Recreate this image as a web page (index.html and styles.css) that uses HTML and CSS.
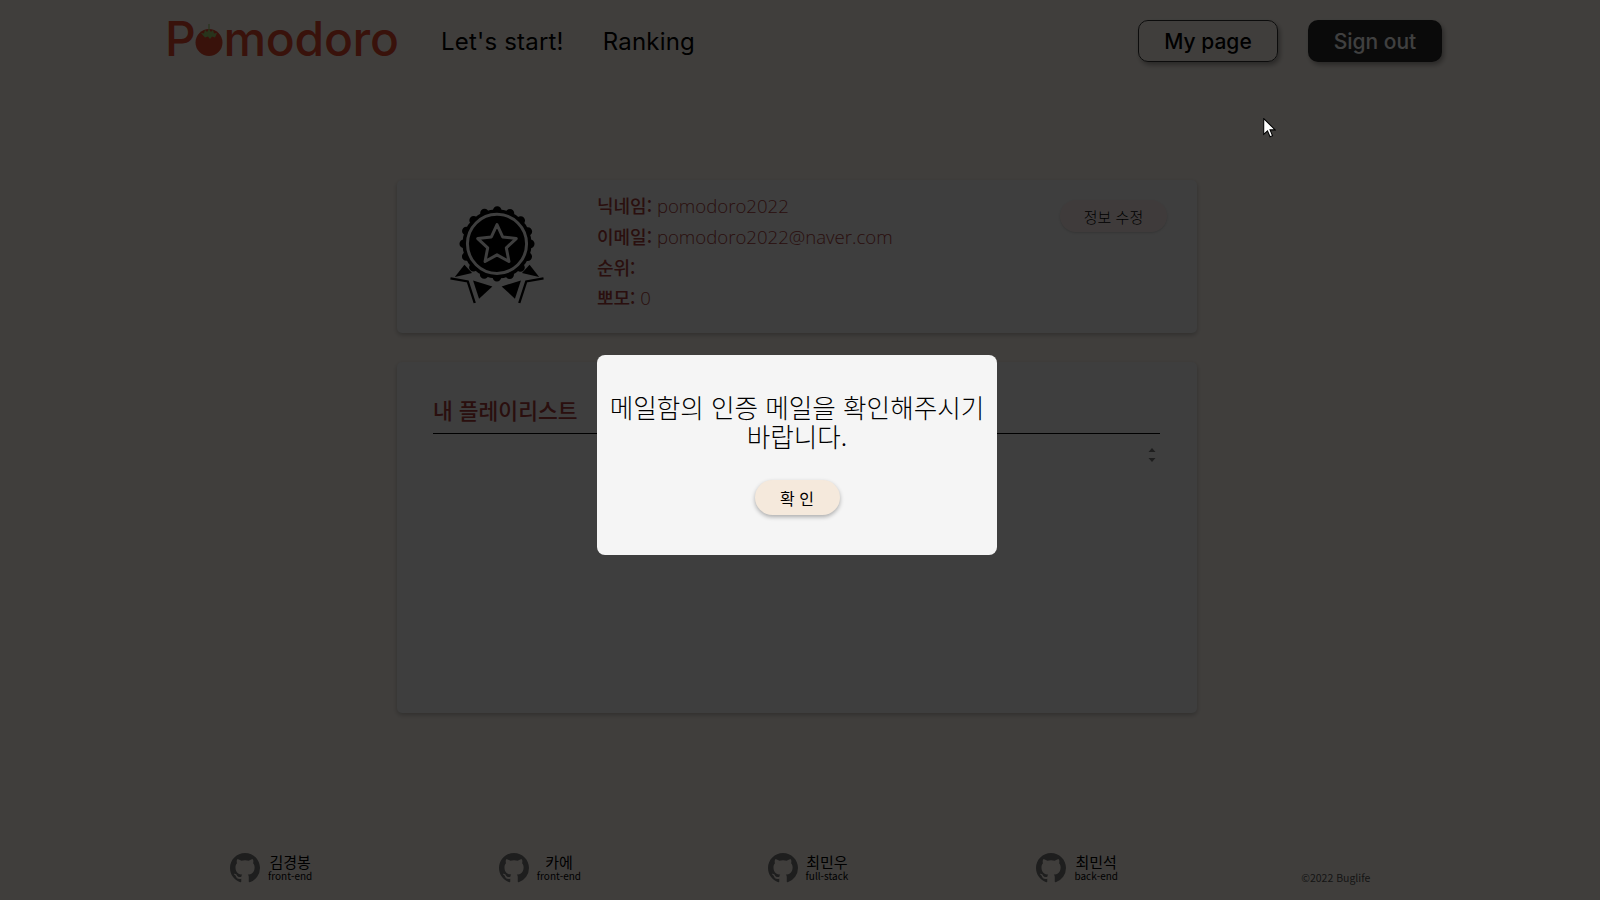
FILE: index.html
```html
<!DOCTYPE html>
<html lang="ko">
<head>
    <meta charset="UTF-8">
    <meta name="viewport" content="width=device-width, initial-scale=1.0">
    <title>Pomodoro - My page</title>
    <link rel="stylesheet" href="styles.css">
</head>
<body>
    <svg class="sprite" width="0" height="0">
        <symbol id="github" viewBox="0 0 16 16">
            <path d="M8 0C3.58 0 0 3.58 0 8c0 3.54 2.29 6.53 5.47 7.59.4.07.55-.17.55-.38 0-.19-.01-.82-.01-1.49-2.01.37-2.53-.49-2.69-.94-.09-.23-.48-.94-.82-1.13-.28-.15-.68-.52-.01-.53.63-.01 1.08.58 1.23.82.72 1.21 1.87.87 2.33.66.07-.52.28-.87.51-1.07-1.78-.2-3.64-.89-3.64-3.95 0-.87.31-1.59.82-2.15-.08-.2-.36-1.02.08-2.12 0 0 .67-.21 2.2.82.64-.18 1.32-.27 2-.27.68 0 1.36.09 2 .27 1.53-1.04 2.2-.82 2.2-.82.44 1.1.16 1.92.08 2.12.51.56.82 1.27.82 2.15 0 3.07-1.87 3.75-3.65 3.95.29.25.54.73.54 1.48 0 1.07-.01 1.93-.01 2.2 0 .21.15.46.55.38A8.013 8.013 0 0016 8c0-4.42-3.58-8-8-8z"/>
        </symbol>
    </svg>

    <!-- Header -->
    <header class="header">
        <a class="logo" href="#">
            <span>P</span>
            <svg class="logo-tomato" viewBox="0 0 28 32">
                <circle cx="14" cy="18.5" r="13.5" fill="#e2492f"/>
                <path d="M6 9l3 .5L10 6l2 2 2-2.500 2 2.500 2-2 1 3.500 3-.5-2 4.500-3-1-2 2.500-2-2.500-3 1z" fill="#9fd070"/>
                <path d="M14 8V0" stroke="#9fd070" stroke-width="1.200"/>
            </svg>
            <span>modoro</span>
        </a>
        <nav class="nav">
            <a href="#">Let's start!</a>
            <a href="#">Ranking</a>
        </nav>
        <div class="header-btns">
            <a class="btn btn-light" href="#">My page</a>
            <a class="btn btn-dark" href="#">Sign out</a>
        </div>
    </header>

    <main class="main">
        <!-- Profile card -->
        <section class="card profile">
            <svg class="medal" viewBox="170 100 300 310">
                <path d="M222 283L193 320 245 308z"/>
                <path d="M418 283L447 320 395 308z"/>
                <path d="M180 324L232 333 253 398" class="ribbon-line"/>
                <path d="M460 324L408 333 387 398" class="ribbon-line"/>
                <path d="M248 330L266 385 306 348z"/>
                <path d="M392 330L374 385 334 348z"/>
                <circle cx="320" cy="220" r="104"/>
                <circle cx="320" cy="220" r="100" class="medal-bumps"/>
                <circle cx="320" cy="220" r="89" class="medal-ring"/>
                <path d="M320 162l17 37 41 5-30 28 8 41-36-20-36 20 8-41-30-28 41-5z" class="medal-star"/>
            </svg>
            <div class="profile-info">
                <p><b>닉네임:</b> pomodoro2022</p>
                <p><b>이메일:</b> pomodoro2022@naver.com</p>
                <p><b>순위:</b></p>
                <p><b>뽀모:</b> 0</p>
            </div>
            <button class="edit-btn">정보 수정</button>
        </section>

        <!-- Playlist card -->
        <section class="card playlist">
            <h3 class="playlist-title">내 플레이리스트</h3>
            <svg class="sort-arrows" viewBox="0 0 8 14">
                <path d="M4 0l3.500 4h-7z"/>
                <path d="M4 14l3.500-4h-7z"/>
            </svg>
        </section>
    </main>

    <footer class="footer">
        <a class="member" href="#">
            <svg class="gh"><use href="#github"/></svg>
            <div><strong>김경봉</strong><small>front-end</small></div>
        </a>
        <a class="member" href="#">
            <svg class="gh"><use href="#github"/></svg>
            <div><strong>카에</strong><small>front-end</small></div>
        </a>
        <a class="member" href="#">
            <svg class="gh"><use href="#github"/></svg>
            <div><strong>최민우</strong><small>full-stack</small></div>
        </a>
        <a class="member" href="#">
            <svg class="gh"><use href="#github"/></svg>
            <div><strong>최민석</strong><small>back-end</small></div>
        </a>
        <span class="copyright">©2022 Buglife</span>
    </footer>

    <!-- Modal -->
    <div class="overlay">
        <div class="modal">
            <p>메일함의 인증 메일을 확인해주시기 바랍니다.</p>
            <button class="ok-btn">확 인</button>
        </div>
    </div>

    <!-- Mouse pointer caught in the screenshot -->
    <svg class="cursor" viewBox="0 0 12 19">
        <path d="M.5.5v15l3.600-3.300 2.400 5.600 2.400-1-2.400-5.500h4.900z" fill="#fff" stroke="#000" stroke-width="1"/>
    </svg>
</body>
</html>
```

FILE: styles.css
```css
* {
    box-sizing: border-box;
}

html, body {
    height: 900px;
    overflow: hidden;
}

body {
    margin: 0;
    padding-right: 6px;
    background-color: #fff8f0;
    font-family: "Noto Sans CJK KR", "Noto Sans", sans-serif;
    color: #000;
}

a {
    color: inherit;
    text-decoration: none;
}

.sprite {
    position: absolute;
}

/* Header */
.header {
    display: flex;
    align-items: center;
    height: 82px;
    padding: 0 152px 0 165px;
    font-family: Inter, sans-serif;
}

.logo {
    display: flex;
    align-items: baseline;
    width: 232px;
    margin-top: -5px;
    font-size: 48px;
    font-weight: 500;
    line-height: 82px;
    letter-spacing: -0.3px;
    color: #e2492f;
}

.logo-tomato {
    flex-shrink: 0;
    width: 28px;
    height: 32px;
    margin: 0 1px -1px -1px;
}

.nav {
    display: flex;
    gap: 39px;
    margin-left: 44px;
    font-size: 24px;
    letter-spacing: 0.2px;
}

.header-btns {
    display: flex;
    gap: 30px;
    margin-left: auto;
}

.btn {
    display: flex;
    align-items: center;
    justify-content: center;
    height: 42px;
    border-radius: 10px;
    font-size: 21px;
    font-weight: 500;
    box-shadow: 2px 3px 5px rgba(0, 0, 0, 0.35);
}

.btn-light {
    width: 140px;
    border: 1px solid #333;
}

.btn-dark {
    width: 134px;
    background-color: #282828;
    color: #fff;
}

/* Cards */
.main {
    width: 800px;
    margin: 98px auto 0;
}

.card {
    position: relative;
    background-color: #f5f5f5;
    border-radius: 5px;
    box-shadow: 0 2px 5px rgba(0, 0, 0, 0.25);
}

.profile {
    display: flex;
    height: 153px;
    padding: 24px 30px 0 50px;
    color: #a83c38;
}

.medal {
    width: 100px;
    height: 103px;
    flex-shrink: 0;
}

.ribbon-line {
    fill: none;
    stroke: #000;
    stroke-width: 7;
}

.medal-bumps {
    fill: none;
    stroke: #000;
    stroke-width: 26;
    stroke-dasharray: 0 39.270;
    stroke-linecap: round;
}

.medal-ring {
    fill: none;
    stroke: #f5f5f5;
    stroke-width: 9;
}

.medal-star {
    fill: #000;
    stroke: #f5f5f5;
    stroke-width: 9;
    stroke-linejoin: round;
}

.profile-info {
    margin: -14px 0 0 50px;
    font-family: "Open Sans", "Noto Sans CJK KR", sans-serif;
    font-size: 18.600px;
    font-weight: 300;
    line-height: 30.6px;
}

.profile-info p {
    margin: 0;
    height: 30.800px;
}

.profile-info b {
    font-family: "Noto Sans CJK KR", sans-serif;
    font-size: 18px;
    font-weight: 500;
}

.edit-btn {
    width: 107px;
    height: 32px;
    margin: -4px 0 0 auto;
    border: none;
    border-radius: 16px;
    background-color: #fcecea;
    box-shadow: 0 1px 2px rgba(0, 0, 0, 0.15);
    font-family: inherit;
    font-size: 15px;
    font-weight: 300;
    color: #000;
}

.playlist {
    height: 351px;
    margin-top: 29px;
    padding: 29px 37px 0 36px;
}

.playlist-title {
    margin: 0;
    padding-bottom: 5px;
    border-bottom: 1px solid #000;
    font-size: 21.500px;
    font-weight: 500;
    line-height: 37px;
    color: #a83c38;
}

.sort-arrows {
    position: absolute;
    top: 86px;
    right: 41px;
    width: 8px;
    height: 14px;
    fill: #777;
}

/* Footer */
.footer {
    display: flex;
    align-items: center;
    height: 30px;
    margin-top: 140px;
    padding-left: 230px;
}

.member {
    display: flex;
    align-items: center;
    gap: 8px;
    width: 268.800px;
    text-align: center;
}

.gh {
    width: 30px;
    height: 30px;
    fill: #777;
}

.member strong,
.member small {
    display: block;
}

.member strong {
    margin-top: -1px;
    font-size: 15px;
    font-weight: 400;
    line-height: 16px;
}

.member small {
    font-size: 10px;
    line-height: 12px;
}

.copyright {
    margin: 19px 0 0 -4px;
    font-size: 10.500px;
    color: #555;
}

/* Modal */
.overlay {
    position: fixed;
    inset: 0;
    display: flex;
    align-items: center;
    justify-content: center;
    padding: 10px 6px 0 0;
    background-color: rgba(0, 0, 0, 0.75);
}

.modal {
    display: flex;
    flex-direction: column;
    align-items: center;
    width: 400px;
    height: 200px;
    padding: 37px 6px 0;
    background-color: #f5f5f5;
    border-radius: 8px;
    text-align: center;
}

.modal p {
    margin: 0 0 30px;
    font-size: 25.600px;
    font-weight: 300;
    line-height: 29px;
}

.ok-btn {
    width: 85px;
    height: 35px;
    border: none;
    border-radius: 18px;
    background-color: #f5e9dc;
    box-shadow: 0 2px 4px rgba(0, 0, 0, 0.3);
    font-family: inherit;
    font-size: 16px;
    color: #000;
}

.cursor {
    position: fixed;
    top: 118px;
    left: 1263px;
    width: 13px;
    height: 20px;
}
```
